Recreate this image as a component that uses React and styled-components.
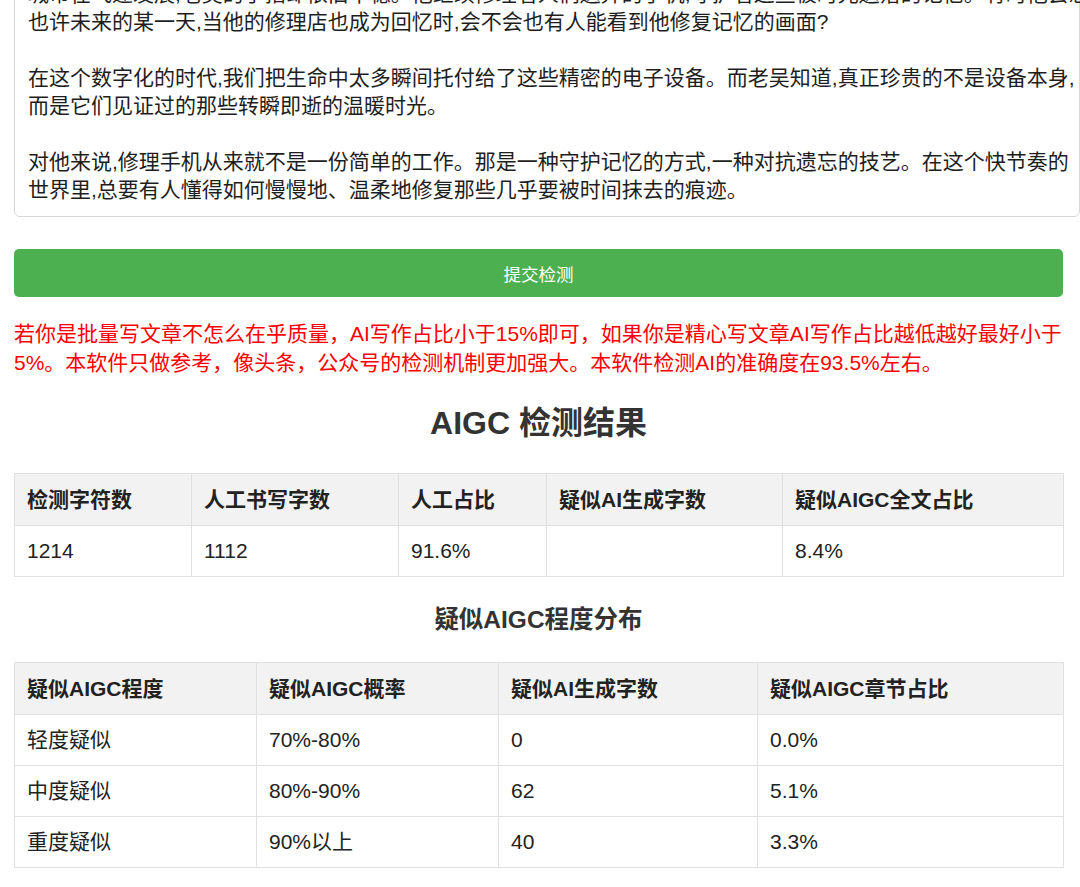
import styled, { createGlobalStyle } from "styled-components";

const GlobalStyle = createGlobalStyle`
  body {
    margin: 0;
    background: #fff;
    font-family: "Liberation Sans", "Noto Sans CJK SC", sans-serif;
    color: #222;
  }
`;

const Page = styled.div`
  padding: 0 0 20px 14px;
  width: 1049px;
`;

const TextBox = styled.div`
  margin-top: -32px;
  width: 1066px;
  box-sizing: border-box;
  border: 1px solid #d6d6d6;
  border-radius: 6px;
  padding: 11px 13px 12px;
  font-size: 21px;
  line-height: 28px;
  color: #1e1e1e;
`;

const Para = styled.p`
  margin: 0 0 28px;
  white-space: nowrap;
  &:last-child {
    margin-bottom: 0;
  }
`;

const SubmitButton = styled.button`
  display: block;
  width: 100%;
  height: 48px;
  margin-top: 32px;
  border: none;
  border-radius: 5px;
  background: #4caf50;
  color: #fff;
  font-family: inherit;
  font-size: 17.5px;
  cursor: pointer;
`;

const Notice = styled.p`
  margin: 22px 0 0;
  color: #ff0000;
  font-size: 21px;
  line-height: 29px;
`;

const Title = styled.h2`
  margin: 27px 0 0;
  text-align: center;
  font-size: 32px;
  line-height: 38px;
  font-weight: bold;
  color: #333;
`;

const SubTitle = styled.h3`
  margin: 28px 0 0;
  text-align: center;
  font-size: 24.5px;
  line-height: 30px;
  font-weight: bold;
  color: #333;
`;

const Table = styled.table`
  width: 1049px;
  margin-top: ${(p) => p.$top}px;
  border-collapse: collapse;
  table-layout: fixed;
  font-size: 21px;
`;

const Col = styled.col`
  width: ${(p) => p.$w}px;
`;

const Th = styled.th`
  text-align: left;
  padding: 11px 12px;
  line-height: 29px;
  border: 1px solid #e0e0e0;
  background: #f2f2f2;
  color: #222;
  font-weight: bold;
`;

const Td = styled.td`
  padding: 11px 12px;
  line-height: 28px;
  border: 1px solid #e0e0e0;
  color: #222;
`;

const story = [
  [
    "城市在飞速发展,老吴的手指却依旧平稳。他继续修理着人们遗弃的手机,守护着这些被时光遗落的记忆。有时他会想,",
    "也许未来的某一天,当他的修理店也成为回忆时,会不会也有人能看到他修复记忆的画面?",
  ],
  [
    "在这个数字化的时代,我们把生命中太多瞬间托付给了这些精密的电子设备。而老吴知道,真正珍贵的不是设备本身,",
    "而是它们见证过的那些转瞬即逝的温暖时光。",
  ],
  [
    "对他来说,修理手机从来就不是一份简单的工作。那是一种守护记忆的方式,一种对抗遗忘的技艺。在这个快节奏的",
    "世界里,总要有人懂得如何慢慢地、温柔地修复那些几乎要被时间抹去的痕迹。",
  ],
];

const summaryCols = [177, 207, 148, 236, 281];
const summaryHead = ["检测字符数", "人工书写字数", "人工占比", "疑似AI生成字数", "疑似AIGC全文占比"];
const summaryRow = ["1214", "1112", "91.6%", "", "8.4%"];

const levelCols = [242, 242, 259, 306];
const levelHead = ["疑似AIGC程度", "疑似AIGC概率", "疑似AI生成字数", "疑似AIGC章节占比"];
const levelRows = [
  ["轻度疑似", "70%-80%", "0", "0.0%"],
  ["中度疑似", "80%-90%", "62", "5.1%"],
  ["重度疑似", "90%以上", "40", "3.3%"],
];

const ResultTable = ({ cols, head, rows, top }) => (
  <Table $top={top}>
    <colgroup>
      {cols.map((w, i) => (
        <Col key={i} $w={w} />
      ))}
    </colgroup>
    <thead>
      <tr>
        {head.map((h) => (
          <Th key={h}>{h}</Th>
        ))}
      </tr>
    </thead>
    <tbody>
      {rows.map((r, i) => (
        <tr key={i}>
          {r.map((c, j) => (
            <Td key={j}>{c}</Td>
          ))}
        </tr>
      ))}
    </tbody>
  </Table>
);

const App = () => (
  <>
    <GlobalStyle />
    <Page>
      <TextBox>
        {story.map((lines, i) => (
          <Para key={i}>
            {lines.map((l, j) => (
              <span key={j}>
                {l}
                {j < lines.length - 1 && <br />}
              </span>
            ))}
          </Para>
        ))}
      </TextBox>
      <SubmitButton>提交检测</SubmitButton>
      <Notice>
        若你是批量写文章不怎么在乎质量，AI写作占比小于15%即可，如果你是精心写文章AI写作占比越低越好最好小于5%。本软件只做参考，像头条，公众号的检测机制更加强大。本软件检测AI的准确度在93.5%左右。
      </Notice>
      <Title>AIGC 检测结果</Title>
      <ResultTable cols={summaryCols} head={summaryHead} rows={[summaryRow]} top={31} />
      <SubTitle>疑似AIGC程度分布</SubTitle>
      <ResultTable cols={levelCols} head={levelHead} rows={levelRows} top={27} />
    </Page>
  </>
);

export default App;
